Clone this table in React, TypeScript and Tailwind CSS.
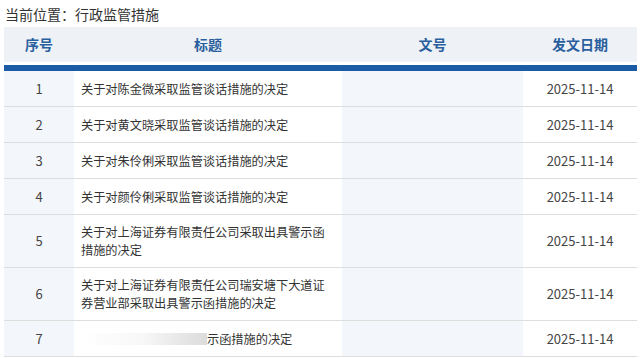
import React from "react";

const rows: { n: string; t: React.ReactNode; tall?: boolean }[] = [
  { n: "1", t: "关于对陈金微采取监管谈话措施的决定" },
  { n: "2", t: "关于对黄文晓采取监管谈话措施的决定" },
  { n: "3", t: "关于对朱伶俐采取监管谈话措施的决定" },
  { n: "4", t: "关于对颜伶俐采取监管谈话措施的决定" },
  { n: "5", t: "关于对上海证券有限责任公司采取出具警示函措施的决定", tall: true },
  { n: "6", t: "关于对上海证券有限责任公司瑞安塘下大道证券营业部采取出具警示函措施的决定", tall: true },
  {
    n: "7",
    t: (
      <span className="flex items-center">
        <span className="inline-block h-[12px] w-[126px] bg-gradient-to-r from-white via-[#f7f7f7] to-[#dcdcdc]" />
        <span>示函措施的决定</span>
      </span>
    ),
  },
];

export default function App() {
  return (
    <div className="w-[640px] h-[358px] overflow-hidden bg-white text-[#333] font-['Noto_Sans_CJK_SC','Noto_Sans',sans-serif]">
      <div className="pl-[5px] pt-[4px] h-[27px] text-[14px] leading-[20px] text-[#333]">当前位置：行政监管措施</div>
      <div className="ml-[4px] w-[633px]">
        <div className="grid grid-cols-[70px_268px_181px_114px] h-[35px] bg-[#eef2f7] text-[14px] font-bold text-[#2a5f9e] items-center">
          <div className="text-center">序号</div>
          <div className="text-center">标题</div>
          <div className="text-center">文号</div>
          <div className="text-center">发文日期</div>
        </div>
        <div className="h-[3px] bg-white" />
        <div className="h-[6px] bg-[#1b5aa5]" />
        {rows.map((r) => (
          <div
            key={r.n}
            className={`grid grid-cols-[70px_268px_181px_114px] text-[12.2px] border-b border-[#dedede] ${r.tall ? "h-[53px]" : "h-[36px]"}`}
          >
            <div className="bg-[#f3f6fa] flex items-center justify-center text-[13px] text-[#444]">{r.n}</div>
            <div className="flex items-center pl-[7px] pr-[14px] leading-[18px]">{r.t}</div>
            <div className="bg-[#f3f6fa]" />
            <div className="flex items-center justify-center text-[13px] text-[#444]">2025-11-14</div>
          </div>
        ))}
      </div>
    </div>
  );
}
